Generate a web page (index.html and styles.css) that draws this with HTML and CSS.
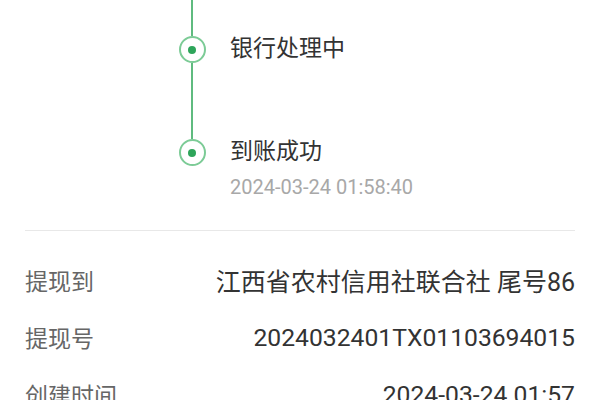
FILE: index.html
```html
<!DOCTYPE html>
<html lang="zh-CN">
<head>
<meta charset="utf-8">
<link rel="stylesheet" href="styles.css">
</head>
<body>
<div class="page">
  <div class="timeline">
    <div class="step">
      <div class="axis">
        <div class="seg seg-top"></div>
        <div class="node"><span class="dot"></span></div>
        <div class="seg seg-fill"></div>
      </div>
      <div class="content first">
        <div class="title">银行处理中</div>
      </div>
    </div>
    <div class="step">
      <div class="axis">
        <div class="node"><span class="dot"></span></div>
      </div>
      <div class="content">
        <div class="title">到账成功</div>
        <div class="time">2024-03-24 01:58:40</div>
      </div>
    </div>
  </div>
  <div class="divider"></div>
  <div class="details">
    <div class="row"><span class="label">提现到</span><span class="value">江西省农村信用社联合社 尾号86</span></div>
    <div class="row"><span class="label">提现号</span><span class="value num">2024032401TX01103694015</span></div>
    <div class="row"><span class="label">创建时间</span><span class="value num">2024-03-24 01:57</span></div>
  </div>
</div>
</body>
</html>
```
FILE: styles.css
```css
html, body {
  margin: 0;
  padding: 0;
  background: #ffffff;
}
body {
  font-family: Roboto, "Noto Sans CJK SC", sans-serif;
  color: #333333;
}
.page {
  width: 600px;
  height: 400px;
  overflow: hidden;
  padding: 0 25px;
  box-sizing: border-box;
}
.timeline {
  padding-left: 153px;
}
.step {
  display: flex;
  gap: 24px;
}
.step:first-child {
  height: 139px;
}
.axis {
  width: 28px;
  display: flex;
  flex-direction: column;
  align-items: center;
  flex-shrink: 0;
}
.seg {
  width: 2px;
  background: #5fbb7f;
}
.seg-top {
  height: 36px;
}
.seg-fill {
  flex: 1;
}
.node {
  width: 27px;
  height: 27px;
  box-sizing: border-box;
  border: 2px solid #7ccb96;
  border-radius: 50%;
  display: flex;
  align-items: center;
  justify-content: center;
  flex-shrink: 0;
}
.dot {
  width: 8px;
  height: 8px;
  border-radius: 50%;
  background: #2ea55a;
}
.content.first {
  padding-top: 36px;
}
.title {
  font-size: 23px;
  line-height: 26px;
  color: #333333;
}
.time {
  margin-top: 11px;
  font-size: 20px;
  line-height: 22px;
  color: #a8a8a8;
}
.divider {
  margin-top: 32px;
  height: 1px;
  background: #e8e8e8;
}
.details {
  padding-top: 33px;
  display: flex;
  flex-direction: column;
  gap: 25px;
}
.row {
  display: flex;
  justify-content: space-between;
  align-items: center;
  height: 32px;
}
.label {
  font-size: 23px;
  color: #666666;
}
.value {
  font-size: 25px;
  color: #333333;
}
.value.num {
  font-size: 24.7px;
}
```
